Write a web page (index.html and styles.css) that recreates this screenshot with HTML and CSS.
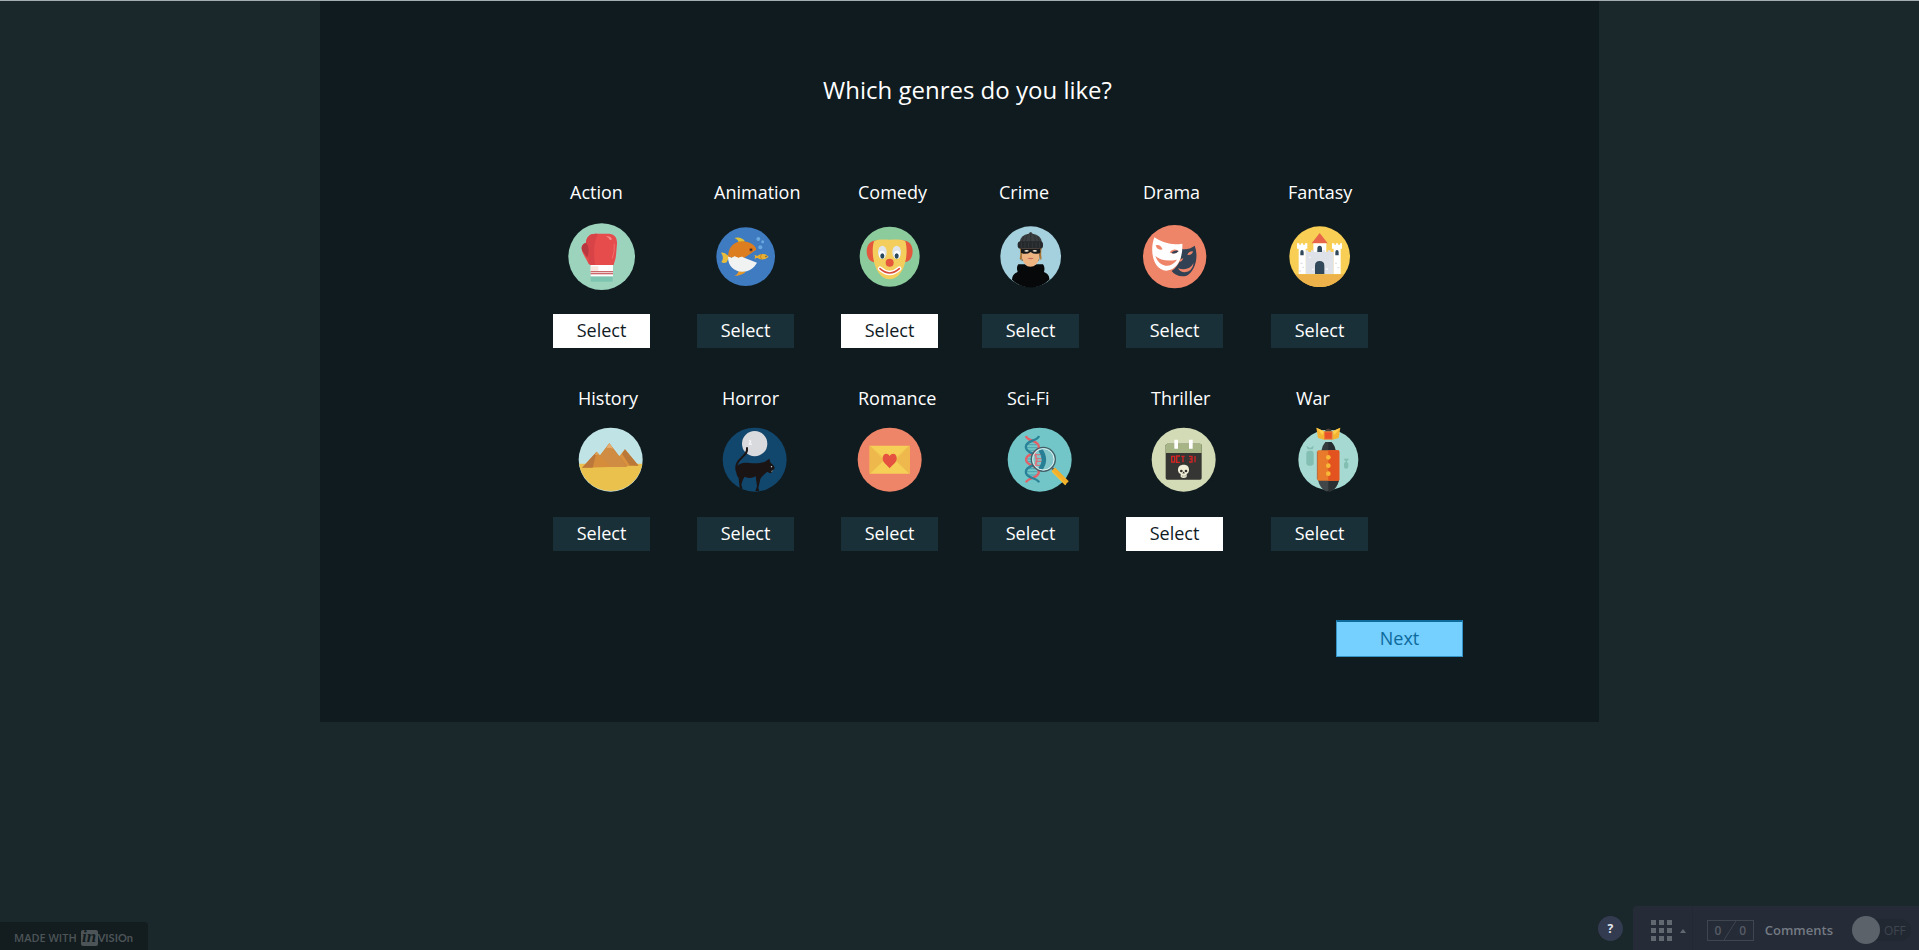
FILE: index.html
```html
<!DOCTYPE html>
<html lang="en">
<head>
<meta charset="utf-8">
<title>Which genres do you like?</title>
<link rel="stylesheet" href="styles.css">
</head>
<body>
<main class="panel">
  <h1 class="title">Which genres do you like?</h1>
  <ul class="genres">
    <li class="genre">
      <h2 class="name">Action</h2>
      <svg class="icon" viewBox="74 149 219 219" aria-hidden="true">
        <circle cx="184" cy="259" r="100" fill="#9bd3bd"/>
        <path d="M151 318H217V334H151Z" fill="#7dc5b1"/>
        <path d="M151 284H218V318H151Z" fill="#fff"/>
        <path d="M151 288H174V302H151Z" fill="#f8e6df"/>
        <path d="M151 303H218V306H151ZM151 309H218V312H151Z" fill="#b8393d"/>
        <path d="M145 281C138 265 124 248 124 234C124 223 132 220 137 217C138 200 149 190 166 190H205C222 190 231 202 230 220L227 255C226 267 222 275 220 284H151Z" fill="#e64c4c"/>
        <path d="M165 283C159 254 160 213 173 191C150 188 138 198 137 218C146 224 143 241 141 254L149 284Z" fill="#d84347"/>
        <path d="M137 217C125 220 121 231 126 241L141 262C147 243 146 226 137 217Z" fill="#b8373f"/>
        <path d="M197 198Q211 196 215 207Q207 212 206 204Z" fill="#f58d8a"/>
        <path d="M222 220Q223 245 216 264" fill="none" stroke="#ef6f6c" stroke-width="3"/>
      </svg>
      <button class="select is-selected" type="button" aria-pressed="true">Select</button>
    </li>
    <li class="genre">
      <h2 class="name">Animation</h2>
      <svg class="icon" viewBox="506 149 219 219" aria-hidden="true">
        <circle cx="616" cy="259" r="88" fill="#3f7bc0"/>
        <path d="M582 203Q602 198 614 213L595 220Q596 208 582 203Z" fill="#e2c235"/>
        <path d="M542 247Q553 245 563 256L565 262L559 276Q550 280 543 275Q553 263 542 247Z" fill="#e9bd3b"/>
        <path d="M594 303H617Q607 316 582 317Q594 311 594 303Z" fill="#e79a2b"/>
        <path d="M563 261C563 230 582 213 606 213C627 213 645 224 648 238L610 264Z" fill="#dc7e20"/>
        <path d="M563 260L574 263L583 259L594 263L606 260L650 277C640 295 624 304 606 304C580 304 563 286 563 260Z" fill="#f1f2f2"/>
        <path d="M563 260L574 264L583 259L594 264L606 260" fill="none" stroke="#f7f3e8" stroke-width="3"/>
        <circle cx="632" cy="238" r="6" fill="#b8581d"/><circle cx="632" cy="238" r="3" fill="#182b3b"/>
        <path d="M642 253L651 257Q660 248 675 252L685 259L675 266Q660 270 651 262L642 266Q646 260 642 253Z" fill="#e7b032"/>
        <path d="M664 251Q656 259 664 267" stroke="#c78124" stroke-width="3" fill="none"/><circle cx="677" cy="258" r="2" fill="#283b45"/>
        <g fill="#69a9df"><circle cx="654" cy="206" r="6"/><circle cx="667" cy="214" r="4.500"/><circle cx="660" cy="231" r="6"/></g>
      </svg>
      <button class="select" type="button" aria-pressed="false">Select</button>
    </li>
    <li class="genre">
      <h2 class="name">Comedy</h2>
      <svg class="icon" viewBox="129 149 219 219" aria-hidden="true">
        <circle cx="239" cy="259" r="90" fill="#8bcb9c"/>
        <path d="M207 212C188 206 170 219 170 242C170 264 182 278 199 275ZM271 212C290 206 308 219 308 242C308 264 296 278 279 275Z" fill="#e4573d"/>
        <path d="M192 213C205 206 222 208 239 208C256 208 273 206 286 213C293 235 290 267 281 290C273 312 257 327 239 327C221 327 205 312 197 290C188 267 185 235 192 213Z" fill="#f3ce5c"/>
        <ellipse cx="217" cy="246" rx="13" ry="20" fill="#dfe5ea"/><ellipse cx="260" cy="246" rx="13" ry="20" fill="#dfe5ea"/>
        <ellipse cx="216" cy="253" rx="9" ry="12" fill="#fff"/><ellipse cx="261" cy="253" rx="9" ry="12" fill="#fff"/>
        <ellipse cx="217" cy="257" rx="6" ry="8" fill="#28485b"/><ellipse cx="260" cy="257" rx="6" ry="8" fill="#28485b"/>
        <circle cx="239" cy="277" r="12" fill="#e4573d"/>
        <path d="M210 295Q239 321 268 295" fill="none" stroke="#fff" stroke-width="13" stroke-linecap="round"/>
        <path d="M210 295Q239 321 268 295" fill="none" stroke="#d84b37" stroke-width="5" stroke-linecap="round"/>
      </svg>
      <button class="select is-selected" type="button" aria-pressed="true">Select</button>
    </li>
    <li class="genre">
      <h2 class="name">Crime</h2>
      <svg class="icon" viewBox="551 149 219 219" aria-hidden="true">
        <circle cx="661" cy="259" r="91" fill="#a5d1df"/>
        <path d="M630 225L691 225L689 252L686 271L634 271Z" fill="#5f3e20"/>
        <path d="M634 230H687V259Q686 275 674 284L679 296H643L648 284Q636 275 634 259Z" fill="#edb482"/>
        <path d="M630 226Q638 257 632 270L628 265Q632 250 628 232ZM691 226Q686 257 691 270L694 265Q691 250 694 232Z" fill="#ad742f"/>
        <path d="M632 235H690V247Q674 255 661 245Q647 255 632 247Z" fill="#171819"/>
        <path d="M641 242Q650 236 656 242Q649 247 641 242ZM666 242Q673 236 681 242Q674 247 666 242Z" fill="#fff0dd"/>
        <path d="M651 264Q661 261 671 264Q661 270 651 264Z" fill="#c66d5c"/>
        <path d="M605 328Q605 311 622 305Q617 290 624 282H643Q659 297 679 282H698Q705 290 701 305Q718 311 717 328A79 79 0 0 1 605 328Z" fill="#060809"/>
        <path d="M628 216Q630 193 655 190Q661 180 667 190Q692 193 695 216Z" fill="#3b3f41"/>
        <path d="M646 213Q647 199 653 192M661 213V190M676 213Q675 199 669 192M635 213L641 198M687 213L681 198" stroke="#24282a" fill="none" stroke-width="2"/>
        <rect x="622" y="213" width="76" height="22" rx="9" fill="#26292b"/>
        <path d="M633 216V232M644 216V232M655 216V232M666 216V232M677 216V232M688 216V232" stroke="#3b3f41" stroke-width="2"/>
      </svg>
      <button class="select" type="button" aria-pressed="false">Select</button>
    </li>
    <li class="genre">
      <h2 class="name">Drama</h2>
      <svg class="icon" viewBox="84 149 219 219" aria-hidden="true">
        <circle cx="194" cy="259" r="95" fill="#ee8468"/>
        <path d="M185 302C194 315 212 321 230 316C253 306 268 262 254 226Q237 239 215 236L211 268Q203 289 185 302Z" fill="#324153"/>
        <path d="M232 254Q236 242 249 243Q246 256 232 254ZM208 269L220 263Q217 274 209 275ZM204 294Q236 304 251 278Q247 304 224 306Q211 306 204 294Z" fill="#ee8468"/>
        <path d="M133 201Q172 228 217 220C219 256 207 298 169 301C129 299 118 241 133 201Z" fill="#fff"/>
        <path d="M137 225Q150 220 158 237Q142 242 137 225ZM179 246Q189 232 206 242Q194 255 179 246Z" fill="#ee8468"/><path d="M184 247Q196 238 206 242Q195 254 184 247Z" fill="#324153"/>
        <path d="M136 257Q160 277 201 268Q187 288 166 286Q145 282 136 257Z" fill="#ee8468"/>
      </svg>
      <button class="select" type="button" aria-pressed="false">Select</button>
    </li>
    <li class="genre">
      <h2 class="name">Fantasy</h2>
      <svg class="icon" viewBox="517 149 219 219" aria-hidden="true">
        <circle cx="627" cy="259" r="91" fill="#f8ce55"/>
        <path d="M553 312H701A91 91 0 0 1 553 312Z" fill="#edb34a"/>
        <path d="M627 188L651 219H603Z" fill="#e96549"/>
        <path d="M608 219H647V247H608Z" fill="#fff"/>
        <path d="M584 246V240H593V245H601V240H610V245H618V240H627V245H635V240H643V245H651V240H660V245H669V311H584Z" fill="#dfe1e9"/>
        <path d="M559 219H566V223H571V219H577V223H583V219H590V235H585V311H564V235H559ZM664 219H671V223H676V219H682V223H688V219H694V235H690V311H669V235H664Z" fill="#fff"/>
        <path d="M613 311V286Q613 272 627 272Q641 272 641 286V311ZM620 245V235Q620 226 627 226Q634 226 634 235V245ZM569 255V246Q569 239 574 239Q579 239 579 246V255ZM674 255V246Q674 239 679 239Q684 239 684 246V255Z" fill="#304859"/>
        <path d="M569 277H576V281H569ZM575 289H580V293H575ZM673 277H679V281H673ZM680 290H686V294H680ZM566 300H571V304H566Z" fill="#dfe1e9"/>
        <path d="M604 295H610V299H604ZM645 294H652V298H645ZM595 259H600V263H595Z" fill="#f7f7fb"/>
      </svg>
      <button class="select" type="button" aria-pressed="false">Select</button>
    </li>
  </ul>
  <ul class="genres genres-second">
    <li class="genre">
      <h2 class="name">History</h2>
      <svg class="icon" viewBox="98 130 219 219" aria-hidden="true">
        <circle cx="208" cy="240" r="96" fill="#c0e3e6"/>
        <path d="M113 252H303A96 96 0 0 1 113 252Z" fill="#eac14c"/>
        <path d="M251 209L292 258L208 261Z" fill="#d8913f"/><path d="M251 209L242 222L265 257L292 258Z" fill="#ba7938"/>
        <path d="M204 191L257 260L153 262Z" fill="#c98237"/><path d="M204 191L167 238L190 262H257Z" fill="#d08c43"/>
        <path d="M204 191L216 207L206 204L195 206Z" fill="#e4ae70"/>
        <path d="M166 216L209 262L122 264Z" fill="#d58c3b"/><path d="M166 216L154 264L122 264Z" fill="#bc783a"/><path d="M166 216L173 224L160 226Z" fill="#e0a256"/>
      </svg>
      <button class="select" type="button" aria-pressed="false">Select</button>
    </li>
    <li class="genre">
      <h2 class="name">Horror</h2>
      <svg class="icon" viewBox="530 130 219 219" aria-hidden="true">
        <circle cx="640" cy="240" r="96" fill="#11466d"/>
        <circle cx="640" cy="192" r="38" fill="#d9dadd"/>
        <path d="M624 181L628 186L624 193L632 194" stroke="#f5f6fa" stroke-width="4" fill="none"/>
        <path d="M617 205C622 232 577 236 586 273" fill="none" stroke="#1b1415" stroke-width="6" stroke-linecap="round"/>
        <path d="M584 265C590 250 609 247 625 250C642 252 660 251 671 246L684 237L688 250Q700 258 700 266L695 272L689 281Q682 279 678 276C668 284 661 291 657 298L651 325L654 334H642L647 320L643 290Q628 299 610 291Q602 301 600 315L604 329L595 325L592 296Q583 285 584 265Z" fill="#1b1415"/>
        <path d="M688 260L693 259L691 264ZM690 275L694 271L692 277Z" fill="#d6e6e8"/>
      </svg>
      <button class="select" type="button" aria-pressed="false">Select</button>
    </li>
    <li class="genre genre-flush">
      <h2 class="name">Romance</h2>
      <svg class="icon" viewBox="130 130 219 219" aria-hidden="true">
        <circle cx="240" cy="240" r="96" fill="#ee8468"/>
        <path d="M180 198H300V282H180Z" fill="#f6cf57"/>
        <path d="M180 198L222 240L180 282ZM300 198L258 240L300 282Z" fill="#efb84c"/>
        <path d="M180 198L240 253L300 198M180 282L224 240M300 282L256 240" fill="none" stroke="#e8b34b" stroke-width="2"/>
        <path d="M240 266C231 255 218 248 219 235C220 220 234 218 240 229C246 218 261 220 261 235C262 248 249 255 240 266Z" fill="#e55340"/>
      </svg>
      <button class="select" type="button" aria-pressed="false">Select</button>
    </li>
    <li class="genre">
      <h2 class="name">Sci-Fi</h2>
      <svg class="icon" viewBox="580 130 219 219" aria-hidden="true">
        <circle cx="690" cy="240" r="96" fill="#72c6c7"/>
        <path d="M656 187H680M652 195H684M652 204H684M657 212H680M658 229H680M650 238H690M652 246H688M658 267H680M652 276H684M653 286H684" stroke="#4da4b1" stroke-width="3"/>
        <path d="M649 169Q650 177 668 183C694 193 694 210 668 221C643 231 643 248 668 258C694 269 694 285 668 295Q651 301 649 308" fill="none" stroke="#e46169" stroke-width="7"/>
        <path d="M688 169Q686 177 668 183C642 193 642 210 668 221C693 231 693 248 668 258C642 269 642 285 668 295Q686 301 688 308" fill="none" stroke="#298298" stroke-width="7"/>
        <circle cx="701" cy="240" r="34" fill="#83c7ca"/>
        <path d="M674 219Q687 240 675 261" stroke="#d97c82" stroke-width="6" fill="none"/>
        <path d="M674 225H700M678 237H704M678 245H704M674 257H701" stroke="#dd6973" stroke-width="3"/>
        <path d="M692 210Q714 240 691 270" stroke="#277f96" stroke-width="13" fill="none"/>
        <circle cx="701" cy="239" r="36" fill="none" stroke="#455d66" stroke-width="4"/>
        <circle cx="701" cy="239" r="32" fill="none" stroke="#e2f0f0" stroke-width="3"/>
        <path d="M725 263L732 270" stroke="#53636a" stroke-width="7"/>
        <path d="M731 269L772 310" stroke="#f1af2b" stroke-width="15"/><path d="M727 274L768 315" stroke="#f7bf35" stroke-width="4"/>
      </svg>
      <button class="select" type="button" aria-pressed="false">Select</button>
    </li>
    <li class="genre">
      <h2 class="name">Thriller</h2>
      <svg class="icon" viewBox="115 130 219 219" aria-hidden="true">
        <circle cx="225" cy="240" r="96" fill="#d3dab6"/>
        <rect x="171" y="192" width="108" height="108" rx="5" fill="#353533"/>
        <path d="M171 220V197Q171 192 176 192H274Q279 192 279 197V220Z" fill="#a6b486"/>
        <path d="M197 180H208V207H197ZM241 180H252V207H241Z" fill="#fff"/>
        <path d="M189 230H198V247H189ZM214 229H204V248H214M218 230H228M223 230V248M241 230H250V247H241M243 238H250M259 229V248" fill="none" stroke="#d42424" stroke-width="4"/>
        <path d="M208 273C207 261 214 255 225 255C236 255 242 261 241 273Q240 280 234 283V292Q225 298 216 292V283Q209 280 208 273Z" fill="#f2efd9"/>
        <circle cx="218" cy="274" r="4" fill="#343330"/><circle cx="232" cy="274" r="4" fill="#343330"/><path d="M225 276L228 281H222ZM221 286V292M226 286V293M231 286V291" stroke="#4d4a40"/>
      </svg>
      <button class="select is-selected" type="button" aria-pressed="true">Select</button>
    </li>
    <li class="genre">
      <h2 class="name">War</h2>
      <svg class="icon" viewBox="547 130 219 219" aria-hidden="true">
        <circle cx="656" cy="240" r="90" fill="#a6d9d1"/>
        <g fill="#82beb1"><rect x="590" y="213" width="22" height="45" rx="9"/><path d="M590 198L601 205L613 198L609 209H594Z"/><rect x="703" y="247" width="13" height="20" rx="6"/><path d="M702 237H718L714 243H706ZM708 240H712V250H708Z"/></g>
        <path d="M644 156Q656 137 668 156Z" fill="#4b3d37"/>
        <path d="M620 144L643 155V180L625 175ZM692 144L669 155V180L687 175Z" fill="#f5b332"/>
        <path d="M620 144L643 155L638 166ZM692 144L669 155L674 166Z" fill="#ffcf4d"/>
        <path d="M643 155H669V180H643Z" fill="#ef7f2f"/><path d="M646 158H666V177H646Z" fill="#e75228"/>
        <path d="M635 214Q637 198 647 187H665Q676 198 678 214Z" fill="#343b3d"/><path d="M656 187H665Q676 198 678 214H656Z" fill="#262d30"/>
        <path d="M625 301H688Q682 326 664 335H648Q631 326 625 301Z" fill="#414648"/><path d="M656 301H688Q682 326 664 335H656Z" fill="#2b3032"/>
        <rect x="623" y="212" width="66" height="91" rx="4" fill="#e9792b"/><path d="M656 212H685Q689 212 689 216V299Q689 303 685 303H656Z" fill="#e2531f"/>
        <path d="M623 216V299" stroke="#b24a24" stroke-width="2"/>
        <g fill="#f7b936"><circle cx="656" cy="233" r="7"/><circle cx="656" cy="258" r="7"/><circle cx="656" cy="282" r="7"/></g>
      </svg>
      <button class="select" type="button" aria-pressed="false">Select</button>
    </li>
  </ul>
  <button class="next" type="button">Next</button>
</main>
<footer class="footer">
  <a class="badge" href="#">MADE WITH <span class="logo"><span class="logo-in">in</span>VISIOn</span></a>
  <button class="help" type="button">?</button>
  <div class="toolbar">
    <button class="screens" type="button" aria-label="Screens">
      <svg class="screens-icon" viewBox="0 0 35 21" fill="#626870"><path d="M0 0h5v5h-5zM8 0h5v5h-5zM16 0h5v5h-5zM0 8h5v5h-5zM8 8h5v5h-5zM16 8h5v5h-5zM0 16h5v5h-5zM8 16h5v5h-5zM16 16h5v5h-5zM29 13l3-4 3 4z"/></svg>
    </button>
    <div class="count"><span>0</span><svg class="slash" viewBox="0 0 12 19"><path d="M0 19L12 0" stroke="#40464f"/></svg><span>0</span></div>
    <label class="comments" for="comments">Comments</label>
    <div class="toggle"><input class="knob" type="checkbox" id="comments"><span>OFF</span></div>
  </div>
</footer>
</body>
</html>
```
FILE: styles.css
```css
* { box-sizing: border-box; }
body {
  margin: 0;
  min-height: 100vh;
  display: flex;
  flex-direction: column;
  border-top: 1px solid #a3adb2;
  background: #1a272b;
  color: #fff;
  font-family: "Open Sans", "Noto Sans", sans-serif;
}
button, input { font: inherit; margin: 0; padding: 0; border: 0; cursor: pointer; }
.panel {
  width: 100%;
  max-width: 1279px;
  margin: 0 auto;
  padding: 73px 136px 65px;
  background: #101b1f;
  display: flex;
  flex-direction: column;
}
.title {
  margin: 0 0 74px;
  padding-left: 16px;
  text-align: center;
  font-size: 24px;
  line-height: 32px;
  font-weight: 400;
}
.genres {
  list-style: none;
  margin: 0 0 38px;
  padding: 0 0 0 97px;
  display: grid;
  grid-template-columns: 144px 144px 141px 144px 145px 97px;
}
.genre { display: flex; flex-direction: column; align-items: flex-start; }
.name {
  margin: 0 0 16px;
  padding-left: 17px;
  font-size: 18px;
  line-height: 24px;
  font-weight: 400;
}
.icon { display: block; width: 73px; height: 73px; margin: 0 0 21px 12px; }
.genres-second { margin-bottom: 69px; }
.genres-second .name { margin-bottom: 13px; padding-left: 25px; }
.genres-second .icon { margin-left: 21px; }
.genres-second .genre-flush .name { padding-left: 17px; }
.genres-second .genre-flush .icon { margin-left: 12px; }
.select {
  width: 97px;
  height: 34px;
  padding-bottom: 2px;
  background: #1a3038;
  color: #fff;
  font-size: 18px;
  line-height: 32px;
}
.select.is-selected { background: #fff; color: #101b1f; }
.next {
  align-self: flex-end;
  width: 127px;
  height: 37px;
  padding-bottom: 2px;
  border: 1px solid #3492c4;
  border-top: 2px solid #0c6a9c;
  background: #75cfff;
  color: #0d6a9c;
  font-size: 18px;
  line-height: 32px;
}
.footer { margin-top: auto; display: flex; align-items: flex-end; }
.badge {
  height: 28px;
  padding: 3px 15px 0 14px;
  border-radius: 0 4px 0 0;
  display: flex;
  align-items: center;
  gap: 4px;
  background: #131c1f;
  color: #4c5457;
  font-size: 11px;
  line-height: 20px;
  font-weight: 600;
  text-decoration: none;
}
.logo { display: flex; align-items: center; font-family: Lato, sans-serif; font-weight: 700; }
.logo-in {
  width: 17px;
  height: 16px;
  border-radius: 2px;
  background: #4c5457;
  color: #131c1f;
  font-family: "Liberation Serif", serif;
  font-size: 17px;
  line-height: 14px;
  font-style: italic;
  font-weight: 700;
  text-align: center;
}
.help {
  width: 25px;
  height: 25px;
  margin: 0 10px 9px auto;
  border-radius: 50%;
  background: #333b50;
  color: #e4e7ee;
  font-size: 12px;
  font-weight: 700;
}
.toolbar {
  height: 44px;
  padding-right: 8px;
  border-radius: 4px 0 0 0;
  display: flex;
  align-items: center;
  background: #252b37;
  color: #747a83;
  font-size: 13px;
}
.screens {
  width: 60px;
  height: 44px;
  padding: 5px 0 0 18px;
  background: none;
  border-right: 1px solid #232934;
}
.screens-icon { display: block; width: 35px; height: 21px; }
.count {
  width: 47px;
  height: 21px;
  margin: 5px 11px 0 14px;
  border: 1px solid #40464f;
  display: flex;
  align-items: center;
  justify-content: center;
  gap: 3px;
  color: #565c65;
  font-size: 12px;
  font-weight: 600;
}
.slash { width: 12px; height: 19px; }
.comments { margin-top: 4px; font-weight: 600; }
.toggle {
  width: 59px;
  height: 22px;
  margin: 4px 0 0 19px;
  border-radius: 11px;
  display: flex;
  align-items: center;
  gap: 4px;
  background: #222832;
  color: #3f4650;
  font-size: 12px;
}
.knob { appearance: none; flex: none; width: 28px; height: 28px; border-radius: 50%; background: #5b626a; }
```
